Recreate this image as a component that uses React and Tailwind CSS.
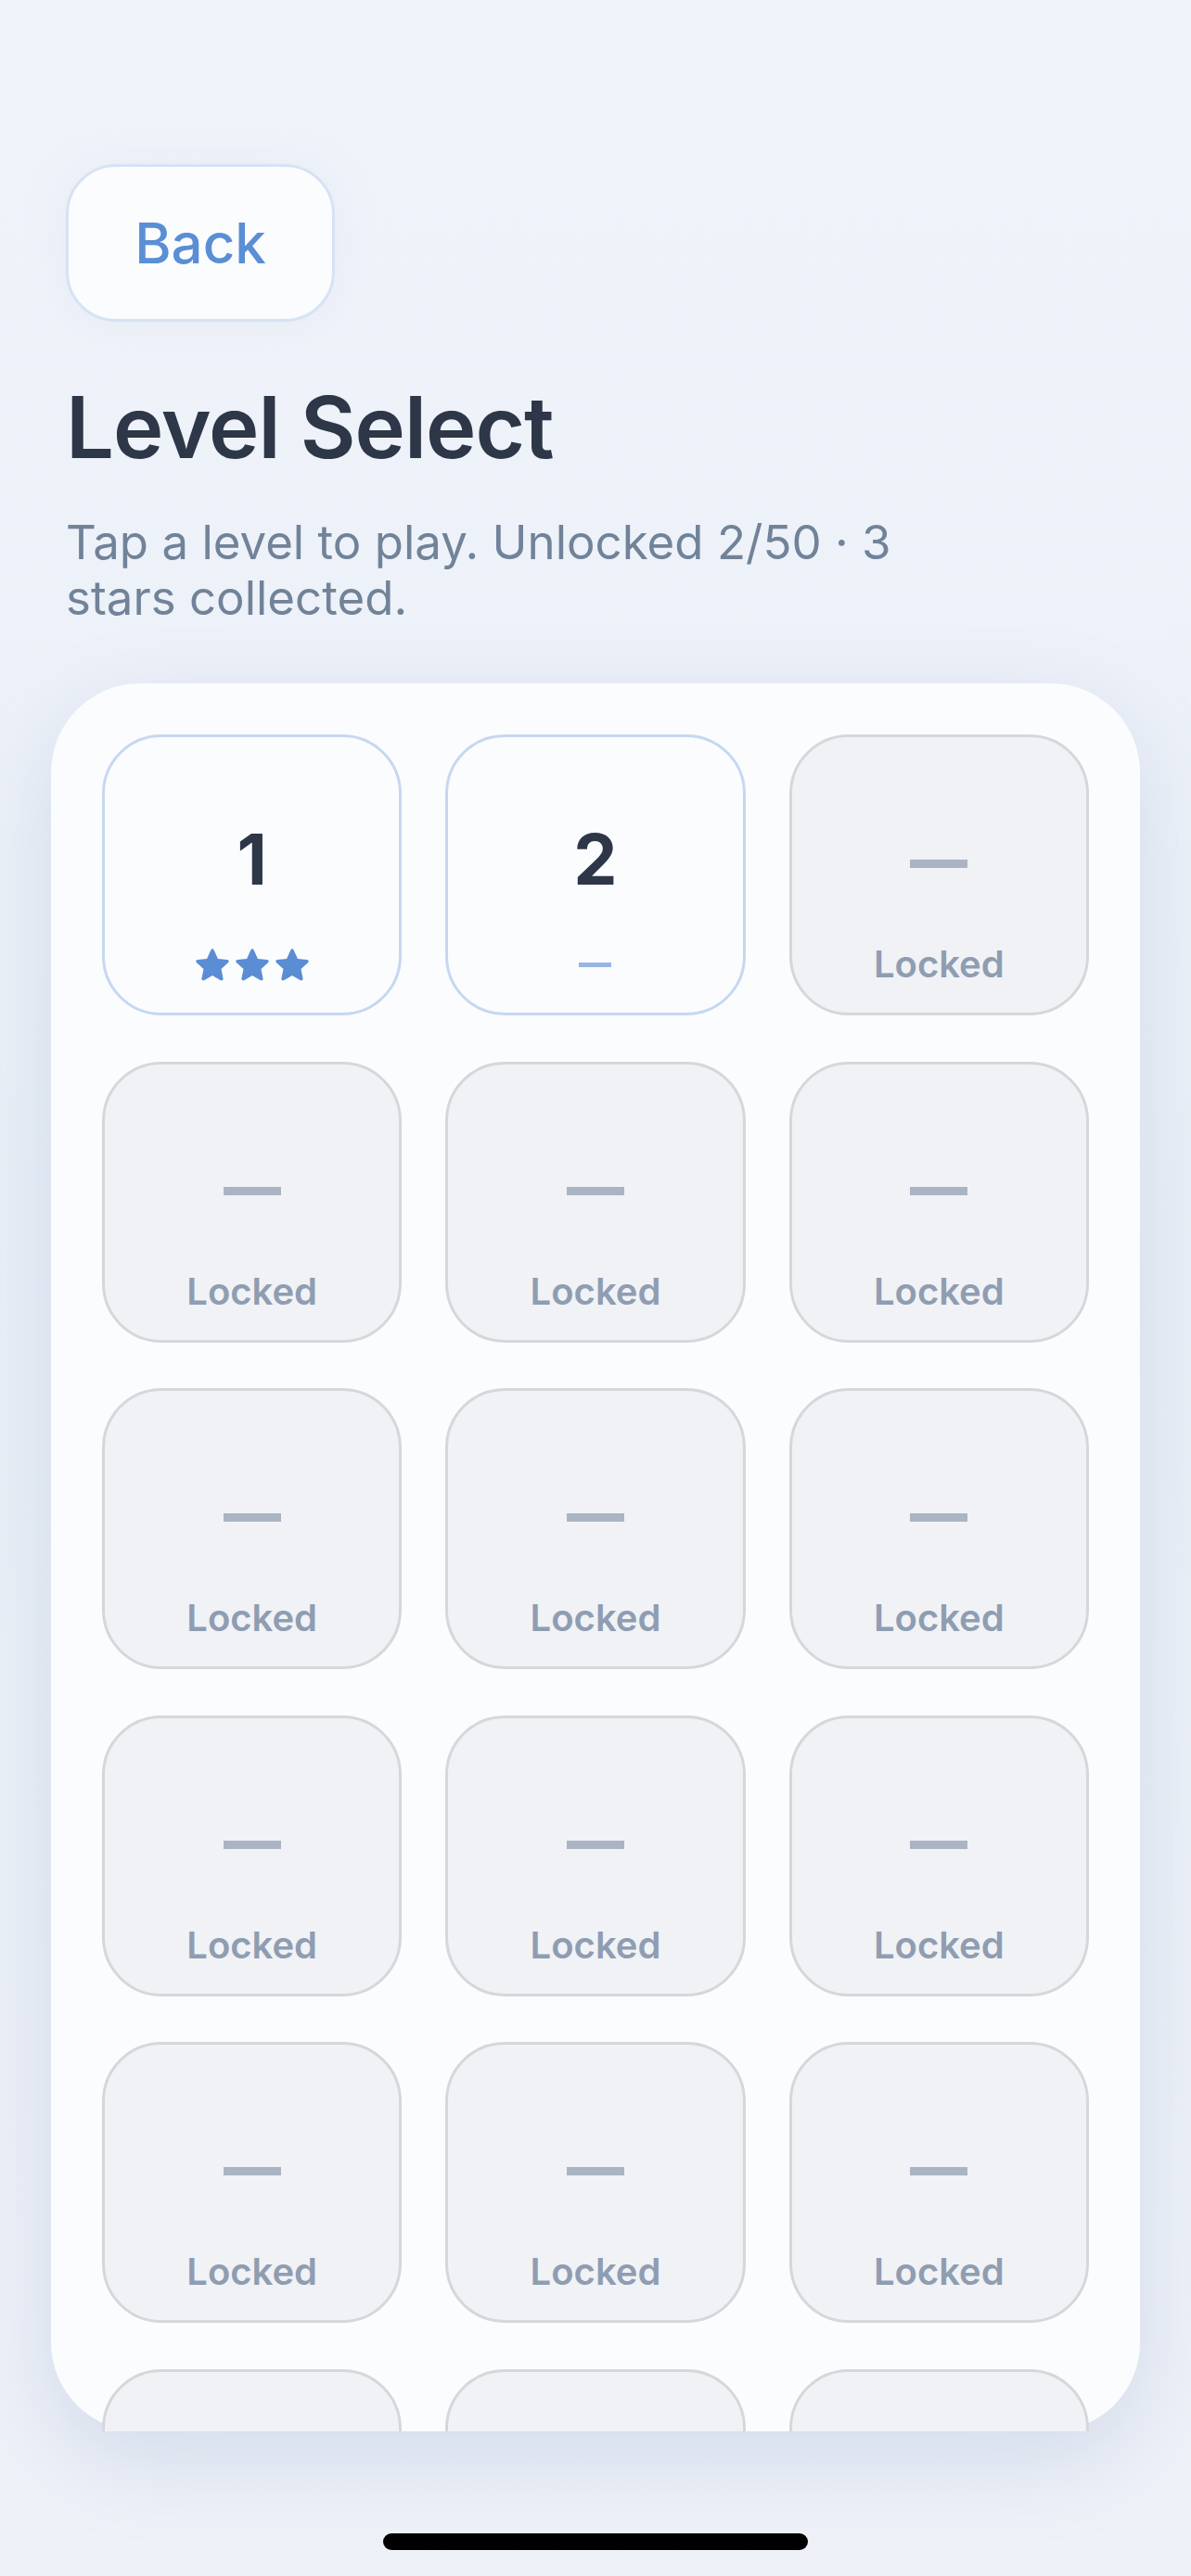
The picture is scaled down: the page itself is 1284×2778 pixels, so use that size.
import React from 'react';

const levels = Array.from({ length: 50 }, (_, i) => ({
  n: i + 1,
  unlocked: i < 2,
  stars: i === 0 ? 3 : 0,
}));

const Star = () => (
  <svg width="36" height="35" viewBox="1.4 1 21.2 20.6" className="block">
    <path
      d="M12 1.2c.4 0 .7.2.9.6l2.6 5.6 6 .7c.9.1 1.2 1.2.6 1.8l-4.5 4.1 1.2 6c.2.9-.8 1.5-1.5 1.1L12 18.1l-5.3 3c-.7.4-1.7-.2-1.5-1.1l1.2-6L1.9 9.9c-.6-.6-.3-1.7.6-1.8l6-.7 2.6-5.6c.2-.4.5-.6.9-.6z"
      fill="#5a8dd4"
    />
  </svg>
);

const Tile = ({ level }) => {
  if (!level.unlocked) {
    return (
      <div className="h-[303px] rounded-[64px] border-[3px] border-[#d5d7db] bg-[#f0f2f5] flex flex-col items-center pt-[87px]">
        <div className="h-[90px] flex items-center justify-center pt-[9px]">
          <div className="w-[62px] h-[9px] bg-[#aab4c3]" />
        </div>
        <div className="mt-[44px] h-[48px] leading-[48px] text-[40px] font-semibold text-[#8f9db2]">Locked</div>
      </div>
    );
  }
  return (
    <div className="h-[303px] rounded-[64px] border-[3px] border-[#c6d8f0] bg-[#fbfcfe] flex flex-col items-center pt-[87px]">
      <div className="h-[90px] leading-[90px] text-[75px] font-bold text-[#2d3748]">{level.n}</div>
      <div className="mt-[44px] h-[48px] flex items-center justify-center gap-[7px]">
        {level.stars > 0 ? (
          Array.from({ length: level.stars }).map((_, i) => <Star key={i} />)
        ) : (
          <div className="w-[35px] h-[5px] bg-[#97b6e3]" />
        )}
      </div>
    </div>
  );
};

export default function App() {
  return (
    <div className="h-[2778px] w-full overflow-hidden bg-gradient-to-b from-[#f0f3fa] via-[#eaeff7] to-[#eef1f8] font-['Inter',sans-serif] flex flex-col">
      <div className="px-[71px] pt-[177px]">
        <button className="w-[290px] h-[170px] rounded-[54px] border-[3px] border-[#d6e3f3] bg-[#fbfcfe] text-[60px] font-medium text-[#5a8ed5] shadow-[0_0_40px_rgba(210,220,236,0.25)]">
          Back
        </button>
        <h1 className="mt-[59px] text-[92px] leading-[1.2] font-semibold text-[#2d3748] tracking-[-1px]">Level Select</h1>
        <p className="mt-[39px] max-w-[900px] text-[51px] leading-[60px] text-[#718399]">
          Tap a level to play. Unlocked 2/50 · 3 stars collected.
        </p>
      </div>

      <div className="mx-[55px] mt-[62px] h-[1885px] rounded-[96px] bg-[#fbfcfe] shadow-[0_30px_90px_rgba(120,145,190,0.22)]">
        <div className="h-full overflow-hidden px-[55px] pt-[55px]">
          <div className="grid grid-cols-3 gap-x-[47px] gap-y-[49.5px]">
            {levels.map((l) => (
              <Tile key={l.n} level={l} />
            ))}
          </div>
        </div>
      </div>

      <div className="flex justify-center pt-[110px]">
        <div className="w-[458px] h-[18px] rounded-full bg-black" />
      </div>
    </div>
  );
}
